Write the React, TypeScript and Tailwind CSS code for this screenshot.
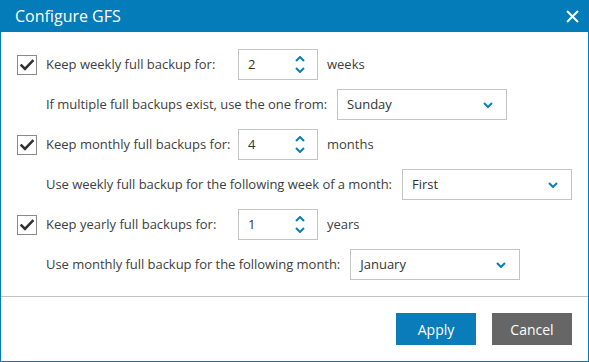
import React from "react";

const font = { fontFamily: '"Open Sans", "Liberation Sans", sans-serif' };

function Check() {
  return (
    <div className="w-[20px] h-[20px] border border-[#8a8a8a] bg-white flex items-center justify-center shrink-0">
      <svg width="14" height="12" viewBox="0 0 14 12">
        <path d="M1.5 6.5 L5 10 L12.5 2" fill="none" stroke="#333" strokeWidth="2.6" strokeLinecap="square" />
      </svg>
    </div>
  );
}

function Spinner({ value }: { value: string }) {
  return (
    <div className="w-[80px] h-[31px] border border-[#c4c4c4] bg-white flex items-center justify-between pl-[9px] pr-[12px] shrink-0">
      <span className="text-[13px] text-[#333]">{value}</span>
      <div className="flex flex-col items-center gap-[5px]">
        <svg width="10" height="6" viewBox="0 0 10 6">
          <path d="M1 5 L5 1 L9 5" fill="none" stroke="#0a7cba" strokeWidth="2" />
        </svg>
        <svg width="10" height="6" viewBox="0 0 10 6">
          <path d="M1 1 L5 5 L9 1" fill="none" stroke="#0a7cba" strokeWidth="2" />
        </svg>
      </div>
    </div>
  );
}

function Select({ value }: { value: string }) {
  return (
    <div className="w-[170px] h-[31px] border border-[#c4c4c4] bg-white flex items-center justify-between pl-[9px] pr-[13px] shrink-0">
      <span className="text-[13px] text-[#333]">{value}</span>
      <svg width="10" height="6" viewBox="0 0 10 6">
        <path d="M1 1 L5 5 L9 1" fill="none" stroke="#0a7cba" strokeWidth="2" />
      </svg>
    </div>
  );
}

function MainRow({ label, value, unit }: { label: string; value: string; unit: string }) {
  return (
    <div className="flex items-center h-[31px]">
      <Check />
      <span className="ml-[9px] w-[192px] text-[13px] text-[#404040]">{label}</span>
      <Spinner value={value} />
      <span className="ml-[9px] text-[13px] text-[#404040]">{unit}</span>
    </div>
  );
}

function SubRow({ label, value }: { label: string; value: string }) {
  return (
    <div className="flex items-center h-[31px] pl-[29px] gap-[10px]">
      <span className="text-[13px] text-[#404040] tracking-[-0.04px]">{label}</span>
      <Select value={value} />
    </div>
  );
}

export default function App() {
  return (
    <div className="w-[589px] h-[362px] bg-white flex flex-col" style={font}>
      <div className="h-[32px] bg-[#047cb9] flex items-center justify-between pl-[15px] pr-[10px] shrink-0">
        <span className="text-white text-[16px]">Configure GFS</span>
        <svg width="13" height="13" viewBox="0 0 13 13">
          <path d="M1 1 L12 12 M12 1 L1 12" stroke="white" strokeWidth="2" />
        </svg>
      </div>
      <div className="flex-1 flex flex-col border-x border-b border-[#047cb9]">
        <div className="flex flex-col gap-[9px] pt-[17px] pl-[16px] pb-[16px]">
          <MainRow label="Keep weekly full backup for:" value="2" unit="weeks" />
          <SubRow label="If multiple full backups exist, use the one from:" value="Sunday" />
          <MainRow label="Keep monthly full backups for:" value="4" unit="months" />
          <SubRow label="Use weekly full backup for the following week of a month:" value="First" />
          <MainRow label="Keep yearly full backups for:" value="1" unit="years" />
          <SubRow label="Use monthly full backup for the following month:" value="January" />
        </div>
        <div className="h-px bg-[#c2c2c2]" />
        <div className="flex justify-end gap-[16px] pt-[16px] pr-[16px]">
          <button className="w-[80px] h-[32px] bg-[#0a7cba] text-white text-[14px]">Apply</button>
          <button className="w-[80px] h-[32px] bg-[#666666] text-white text-[14px]">Cancel</button>
        </div>
      </div>
    </div>
  );
}
